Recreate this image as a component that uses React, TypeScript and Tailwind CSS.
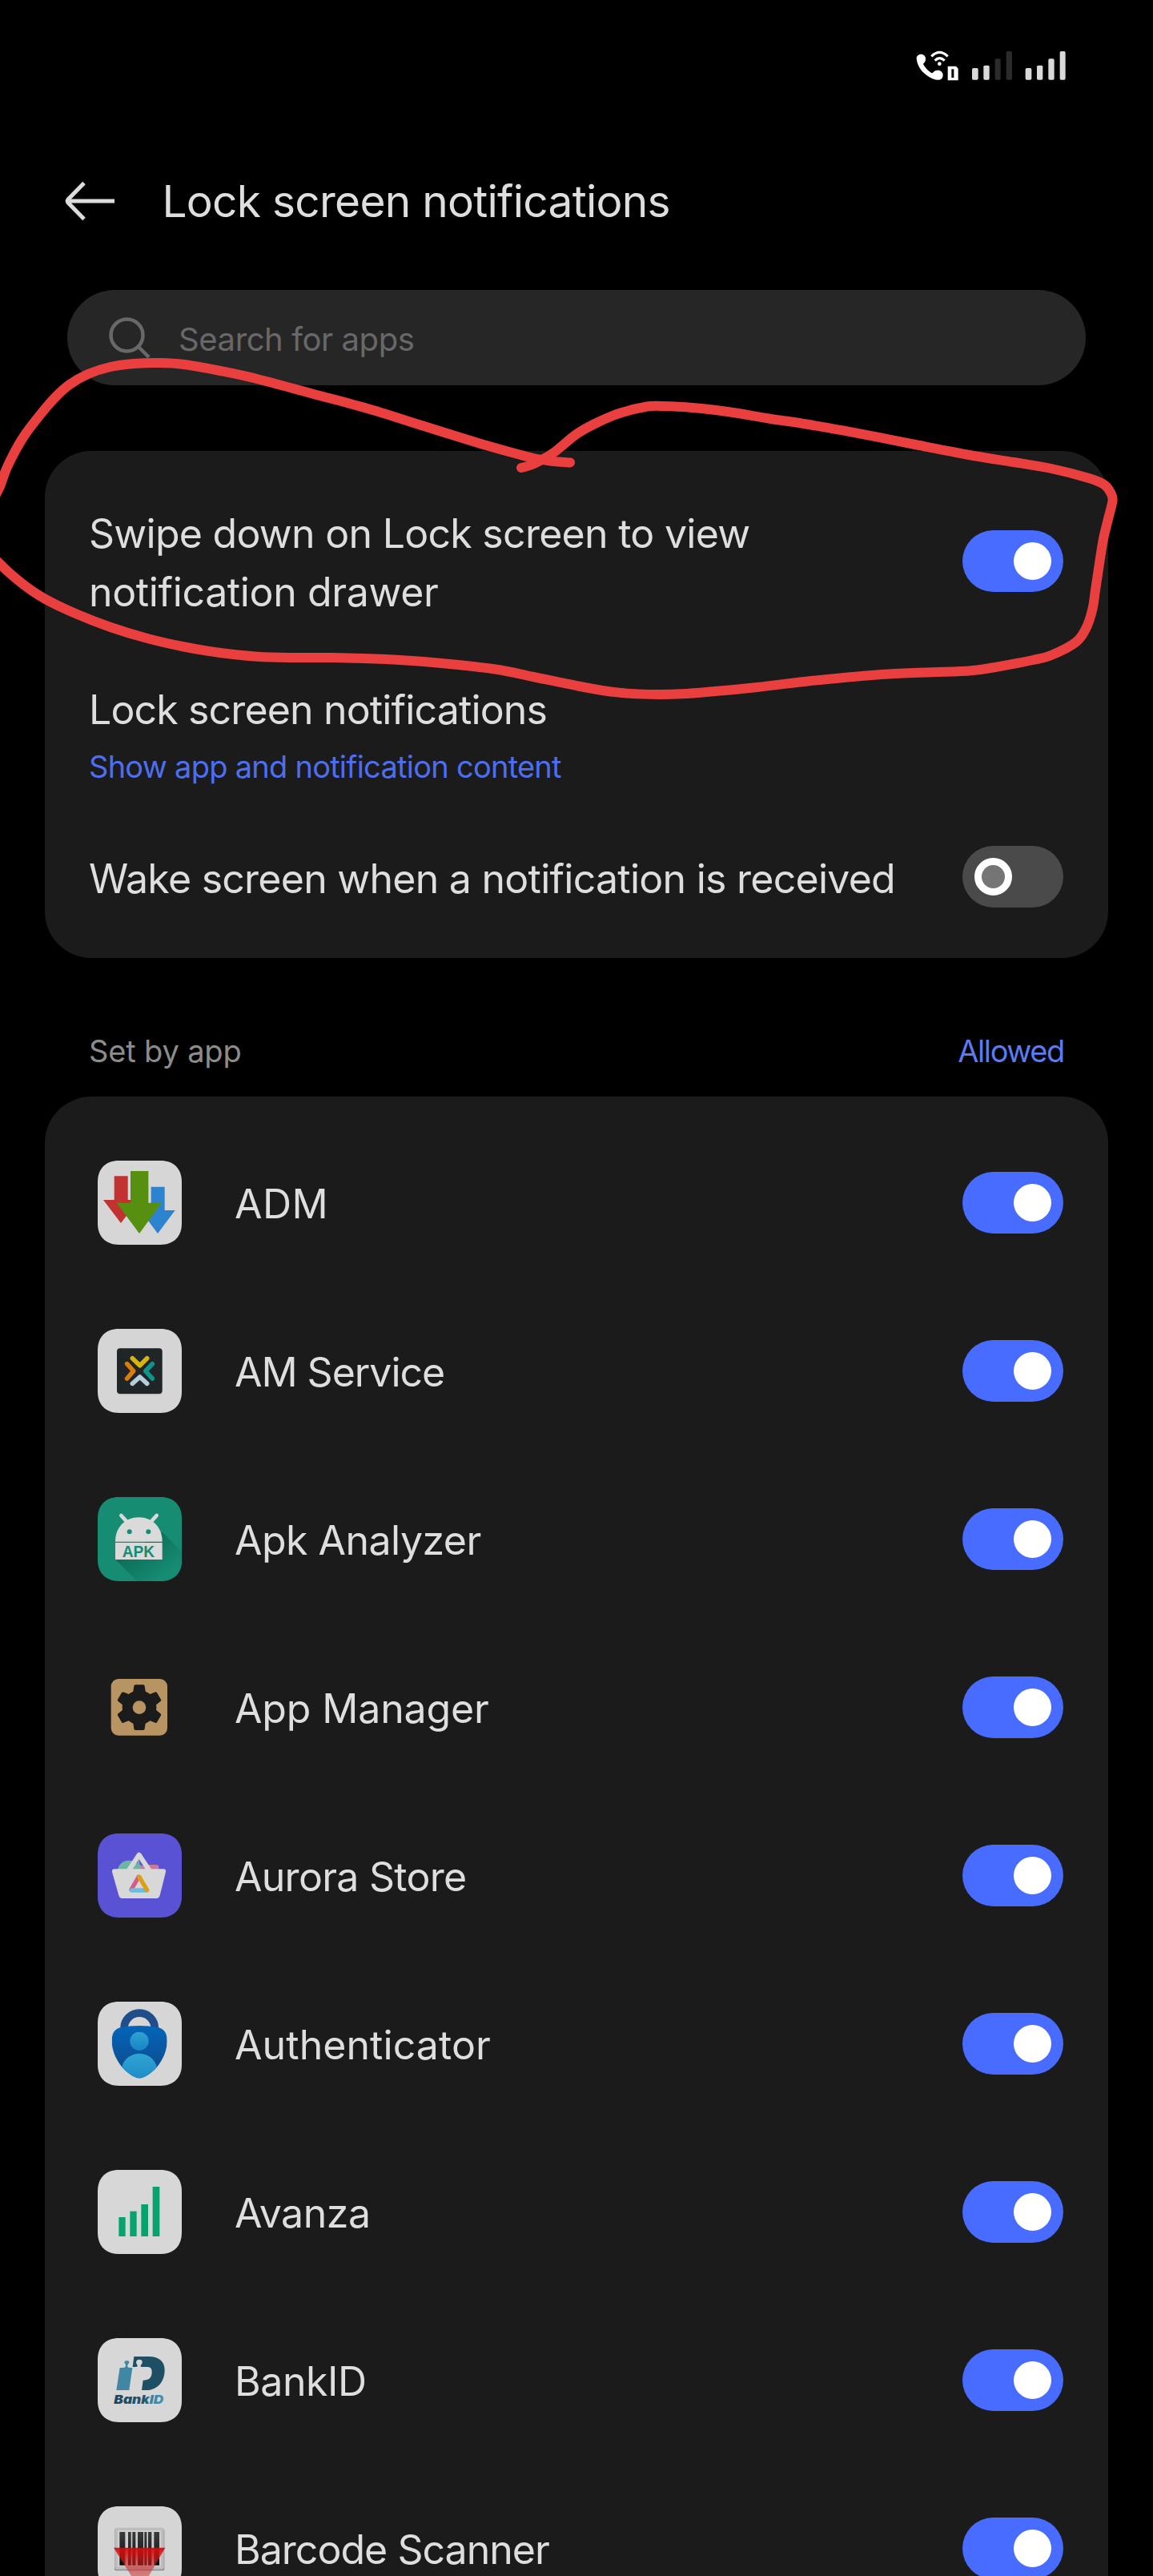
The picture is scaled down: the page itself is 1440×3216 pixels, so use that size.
import type { ReactNode } from "react";

function Toggle({ on }: { on: boolean }) {
  return on ? (
    <div className="flex h-[77px] w-[126px] shrink-0 items-center justify-end rounded-full bg-[#476cff] pr-[15px]">
      <div className="size-[47px] rounded-full bg-white" />
    </div>
  ) : (
    <div className="flex h-[77px] w-[126px] shrink-0 items-center rounded-full bg-[#4a4a4a] pl-[15px]">
      <div className="size-[47px] rounded-full border-[9px] border-white bg-[#757575]" />
    </div>
  );
}

function StatusIcons() {
  return (
    <svg viewBox="130 70 570 115" className="h-[38.33px] w-[190px]">
      <path
        d="M152 84C141 84 134 92 135 101C138 127 152 149 172 162C190 175 205 181 219 180C228 179 234 172 234 162C234 152 226 144 215 144C204 144 200 149 194 155C182 150 166 134 160 120C165 116 170 110 169 101C169 91 162 84 152 84Z"
        fill="#fff"
      />
      <g fill="none" stroke="#fff" strokeWidth="9.5">
        <path d="M191 92Q221 62 252 92" />
        <path d="M204 108Q221 90 240 108" />
      </g>
      <circle cx="221" cy="120" r="7" fill="#fff" />
      <path d="M252 129H283L291 138V182H252Z" fill="#fff" />
      <path d="M266 140H275V172H266Z" fill="#000" />
      <g fill="#d9d9d9">
        <rect x="343" y="136" width="23" height="44" rx="5" />
        <rect x="386" y="126" width="22" height="54" rx="5" />
        <rect x="543" y="136" width="23" height="44" rx="5" />
        <rect x="586" y="126" width="22" height="54" rx="5" />
        <rect x="629" y="101" width="22" height="79" rx="5" />
        <rect x="672" y="73" width="21" height="107" rx="5" />
      </g>
      <g fill="#2b2b2b">
        <rect x="429" y="101" width="21" height="79" rx="5" />
        <rect x="471" y="73" width="22" height="107" rx="5" />
      </g>
    </svg>
  );
}

function Tile({ bg, children }: { bg: string; children: ReactNode }) {
  return (
    <svg viewBox="0 0 315 315" className="block size-[105px] shrink-0">
      <path
        d="M80 0H235C285 0 315 30 315 80V235C315 285 285 315 235 315H80C30 315 0 285 0 235V80C0 30 30 0 80 0Z"
        fill={bg}
      />
      {children}
    </svg>
  );
}

const adm = (
  <Tile bg="#d6d6d6">
    <path d="M62 58H113V147H153L87 234L21 147H62Z" fill="#c23230" />
    <path d="M200 98H251V186H290L225 273L160 186H200Z" fill="#2c83cf" />
    <path d="M123 39H190V158H240L156 273L71 158H123Z" fill="#579010" />
  </Tile>
);

const amService = (
  <Tile bg="#d5d5d5">
    <rect x="72" y="78" width="170" height="169" rx="12" fill="#b9b9b9" />
    <rect x="72" y="73" width="170" height="170" rx="12" fill="#202528" />
    <g fill="none" strokeWidth="17" strokeLinecap="round" strokeLinejoin="round">
      <path d="M130 110L158 137L185 110" stroke="#d8b50a" />
      <path d="M110 131L134 158L110 186" stroke="#d67f0c" />
      <path d="M205 131L179 158L205 186" stroke="#0d958c" />
      <path d="M130 205L158 180L185 205" stroke="#b5cfda" />
    </g>
  </Tile>
);

const apkAnalyzer = (
  <Tile bg="#168c72">
    <defs>
      <linearGradient id="apkShade" x1="0" y1="0" x2="0.8" y2="0.8">
        <stop offset="0.4" stopColor="#0c6f59" />
        <stop offset="1" stopColor="#168c72" />
      </linearGradient>
    </defs>
    <path d="M242 132L315 205V240C315 285 285 315 235 315H148L66 234Z" fill="url(#apkShade)" />
    <path d="M66 167C66 112 104 76 154 76C204 76 242 112 242 167Z" fill="#dadada" />
    <path d="M88 69L108 91M221 69L201 91" stroke="#dadada" strokeWidth="14" strokeLinecap="round" />
    <circle cx="119" cy="130" r="9" fill="#168c72" />
    <circle cx="190" cy="130" r="9" fill="#168c72" />
    <rect x="66" y="171" width="176" height="63" fill="#dadada" />
    <text
      x="92"
      y="225"
      textLength="121"
      lengthAdjust="spacingAndGlyphs"
      fontSize="58"
      fontWeight="700"
      fontFamily="Liberation Sans, sans-serif"
      fill="#168c72"
    >
      APK
    </text>
  </Tile>
);

const gearTooth = "M132 104L136 78Q137 73 141 73H171Q175 73 176 78L180 104Z";
const appManager = (
  <Tile bg="#1b1b1b">
    <rect x="50" y="51" width="211" height="212" rx="28" fill="#b99463" />
    <g fill="#1b1b1b">
      <circle cx="156" cy="158" r="64" />
      {[0, 60, 120, 180, 240, 300].map((a) => (
        <path key={a} d={gearTooth} transform={`rotate(${a} 156 158)`} />
      ))}
    </g>
    <circle cx="156" cy="158" r="25" fill="#b99463" />
  </Tile>
);

const aurora = (
  <Tile bg="#5a52d5">
    <circle cx="117" cy="144" r="43" fill="#6fb5a3" />
    <rect x="150" y="117" width="79" height="30" rx="9" fill="#cc7a9c" />
    <path d="M140 133L155 96L163 133Z" fill="#6fb5a3" />
    <path d="M155 92L175 122L158 118Z" fill="#5a52d5" />
    <path d="M117 138L155 80L193 138" fill="none" stroke="#d8d8d8" strokeWidth="18" strokeLinejoin="round" />
    <path
      d="M64 133H246Q257 133 255 144L233 232Q230 243 220 243H91Q82 243 79 232L54 144Q52 133 64 133Z"
      fill="#d8d8d8"
    />
    <g strokeWidth="16" strokeLinecap="round">
      <path d="M126 210L153 163" stroke="#cf5d8d" />
      <path d="M128 213H180" stroke="#6cbcdc" />
      <path d="M156 163L185 212" stroke="#dca010" />
    </g>
  </Tile>
);

const authenticator = (
  <Tile bg="#d6d6d6">
    <defs>
      <linearGradient id="authBody" x1="0" y1="0" x2="0" y2="1">
        <stop offset="0" stopColor="#0466bb" />
        <stop offset="1" stopColor="#0f4786" />
      </linearGradient>
      <linearGradient id="authUser" x1="0" y1="0" x2="0" y2="1">
        <stop offset="0" stopColor="#2fa4d3" />
        <stop offset="1" stopColor="#1783c4" />
      </linearGradient>
      <clipPath id="authShield">
        <path d="M84 97Q156 83 229 97C248 103 260 117 260 146C260 208 216 264 172 283Q156 290 141 283C98 264 53 208 53 146C53 117 65 103 84 97Z" />
      </clipPath>
    </defs>
    <path d="M99 105V100A57 57 0 0 1 214 100V105" fill="none" stroke="#204e8a" strokeWidth="29" />
    <g clipPath="url(#authShield)">
      <rect x="50" y="80" width="215" height="210" fill="url(#authBody)" />
      <circle cx="156" cy="262" r="68" fill="url(#authUser)" />
    </g>
    <circle cx="156" cy="148" r="35" fill="url(#authUser)" />
  </Tile>
);

const avanza = (
  <Tile bg="#d7d7d7">
    <g fill="#08a36d">
      <rect x="79" y="177" width="25" height="72" />
      <rect x="121" y="155" width="25" height="94" />
      <rect x="163" y="129" width="26" height="120" />
      <rect x="206" y="63" width="26" height="186" />
    </g>
  </Tile>
);

const bankId = (
  <Tile bg="#d7d7d7">
    <defs>
      <linearGradient id="bankText" x1="0" y1="0" x2="1" y2="0">
        <stop offset="0" stopColor="#1c4458" />
        <stop offset="0.62" stopColor="#27566d" />
        <stop offset="0.7" stopColor="#3c7f9c" />
        <stop offset="1" stopColor="#4a93b3" />
      </linearGradient>
    </defs>
    <path
      d="M83 111H96C105 110 107 104 103 96C98 90 100 85 109 85C118 85 121 90 115 96C109 104 111 110 120 111H130L118 195H70Z"
      fill="#3f87a3"
    />
    <path
      d="M136 69H192C232 69 251 90 251 119C251 165 222 195 182 195H165L170 158C190 158 202 150 203 130C204 113 197 108 184 108H168C160 108 159 103 164 98C171 89 166 80 156 80C146 80 141 89 147 98C151 104 149 108 143 108H131Z"
      fill="#1e4f65"
    />
    <text
      x="61"
      y="245"
      textLength="186"
      lengthAdjust="spacingAndGlyphs"
      fontSize="45"
      fontWeight="900"
      fontStyle="italic"
      fontFamily="Inter, Liberation Sans, sans-serif"
      fill="url(#bankText)"
    >
      BankID
    </text>
  </Tile>
);

const bars = [
  [82, 21],
  [114, 11],
  [130, 12],
  [150, 21],
  [175, 9],
  [189, 13],
  [211, 20],
];
const barcode = (
  <Tile bg="#d5d5d5">
    <defs>
      <linearGradient id="barInk" x1="0" y1="0" x2="0" y2="1">
        <stop offset="0" stopColor="#3c3c3c" />
        <stop offset="1" stopColor="#0c0c0c" />
      </linearGradient>
      <linearGradient id="beam" x1="0" y1="0" x2="0" y2="1">
        <stop offset="0" stopColor="#d90606" stopOpacity="0.95" />
        <stop offset="0.4" stopColor="#cc2020" stopOpacity="0.6" />
        <stop offset="1" stopColor="#cc5050" stopOpacity="0.45" />
      </linearGradient>
    </defs>
    <rect x="63" y="84" width="187" height="157" rx="8" fill="#8e8e8e" />
    <rect x="64" y="80" width="184" height="156" rx="8" fill="#bdbdbd" />
    <rect x="75" y="90" width="162" height="136" fill="#cfcfcf" />
    {bars.map(([x, w]) => (
      <rect key={x} x={x} y="96" width={w} height="125" fill="url(#barInk)" />
    ))}
    <path d="M60 155H253L160 315Z" fill="url(#beam)" />
  </Tile>
);

const apps: { name: string; icon: ReactNode; tracking: string }[] = [
  { name: "ADM", icon: adm, tracking: "tracking-[0.4px]" },
  { name: "AM Service", icon: amService, tracking: "tracking-[-1.04px]" },
  { name: "Apk Analyzer", icon: apkAnalyzer, tracking: "tracking-[-0.52px]" },
  { name: "App Manager", icon: appManager, tracking: "tracking-[-0.15px]" },
  { name: "Aurora Store", icon: aurora, tracking: "tracking-[-0.72px]" },
  { name: "Authenticator", icon: authenticator, tracking: "tracking-[0.07px]" },
  { name: "Avanza", icon: avanza, tracking: "tracking-[-0.44px]" },
  { name: "BankID", icon: bankId, tracking: "tracking-[-0.44px]" },
  { name: "Barcode Scanner", icon: barcode, tracking: "tracking-[-0.97px]" },
];

// Points of the freehand marker loop, in page pixels.
const marker: [number, number][] = [
  [651, 584], [662, 581], [675, 575], [693, 564], [720, 542], [747, 527], [775, 515.5], [808, 507.5],
  [827, 507], [865, 509], [912, 514.5], [960, 522.5], [1007, 529.5], [1054, 537.7], [1101, 546.7],
  [1148, 556], [1219, 569.5], [1266, 577], [1313, 585], [1360, 597], [1379, 605], [1387, 615],
  [1389.5, 625], [1384, 648], [1378, 673], [1372.5, 707], [1368, 737], [1364.5, 760], [1357, 783],
  [1344, 801.5], [1313, 818], [1290, 824], [1243, 833], [1210, 837.5], [1148, 839.7], [1101, 842],
  [1007, 850.7], [936, 859], [851, 866.3], [794, 866.3], [761, 863.3], [722, 856.5], [666, 845],
  [620, 835.7], [551, 828], [482, 823], [413, 821], [367, 821], [321, 819.7], [275, 815], [230, 807.5],
  [184, 797], [138, 783], [92, 765], [55, 747], [27, 728], [0, 704], [-14, 685], [-14, 640],
  [0, 607], [9, 583], [27, 549], [46, 523], [69, 496], [87, 480], [110, 467], [138, 458], [168, 454],
  [200, 453], [230, 455], [275, 463], [321, 473], [390, 491.5], [459, 510], [528, 531.5], [597, 553],
  [643, 566], [666, 572], [689, 575.7], [712, 577.5],
];

function smooth(p: [number, number][]) {
  let d = `M${p[0][0]} ${p[0][1]}`;
  for (let i = 0; i < p.length - 1; i++) {
    const a = p[Math.max(i - 1, 0)];
    const b = p[i];
    const c = p[i + 1];
    const e = p[Math.min(i + 2, p.length - 1)];
    d += `C${b[0] + (c[0] - a[0]) / 6} ${b[1] + (c[1] - a[1]) / 6} ${c[0] - (e[0] - b[0]) / 6} ${c[1] - (e[1] - b[1]) / 6} ${c[0]} ${c[1]}`;
  }
  return d;
}

export default function App() {
  return (
    <div className="relative flex h-[3216px] w-[1440px] flex-col overflow-hidden bg-black font-['Inter','Liberation_Sans',sans-serif] text-[50px] text-[#dedede]">
      <div className="flex h-[190px] shrink-0 justify-end pt-[63px] pr-[106.7px]">
        <StatusIcons />
      </div>

      <header className="flex h-[122px] shrink-0 items-center pl-[80px]">
        <svg viewBox="0 0 64 52" className="h-[52px] w-[64px]" fill="none" stroke="#dcdcdc" strokeWidth="5">
          <path d="M63 26H5M25 3.5L5 24Q3.500 26 5 28L25 48.500" />
        </svg>
        <h1 className="ml-[58.5px] text-[55px] leading-[66px] tracking-[-0.73px]">Lock screen notifications</h1>
      </header>

      <div className="mx-[84px] mt-[50px] flex h-[119px] shrink-0 items-center rounded-full bg-[#262626] pl-[52px] text-[#686868]">
        <svg viewBox="0 0 52 52" className="size-[52px]" fill="none" stroke="#686868" strokeWidth="4.500">
          <circle cx="22.500" cy="22.500" r="20" />
          <path d="M37 37L50 50" />
        </svg>
        <span className="ml-[35px] pt-[4px] text-[40px] leading-[48px] tracking-[-0.4px]">Search for apps</span>
      </div>

      <section className="mx-[56px] mt-[82px] h-[633px] shrink-0 rounded-[58px] bg-[#1b1b1b] pr-[56px] pl-[55px] pt-[27px]">
        <div className="flex h-[221px] items-center justify-between">
          <p className="pt-[5px] leading-[73px]">
            <span className="block tracking-[-0.72px]">Swipe down on Lock screen to view</span>
            <span className="block tracking-[-0.36px]">notification drawer</span>
          </p>
          <Toggle on />
        </div>
        <div className="h-[179px] pt-[45px]">
          <p className="leading-[60px] tracking-[-0.85px]">Lock screen notifications</p>
          <p className="mt-4 text-[38px] leading-[50px] tracking-[-0.74px] text-[#4e6ef0]">
            Show app and notification content
          </p>
        </div>
        <div className="flex items-center justify-between pt-[66px]">
          <p className="pt-[4px] leading-[60px] tracking-[-0.74px]">Wake screen when a notification is received</p>
          <Toggle on={false} />
        </div>
      </section>

      <div className="flex h-[173px] shrink-0 justify-between pt-[91px] pr-[111px] pl-[111px] text-[38px] leading-[50px]">
        <span className="tracking-[-0.15px] text-[#8c8c8c]">Set by app</span>
        <span className="tracking-[-1.4px] text-[#5b7bf3]">Allowed</span>
      </div>

      <section className="mx-[56px] h-[1960px] shrink-0 rounded-t-[58px] bg-[#1b1b1b] pt-[27px]">
        {apps.map((app) => (
          <div key={app.name} className="flex h-[210px] items-center pr-[56px] pl-[66px]">
            {app.icon}
            <span className={`ml-[66px] flex-1 pt-[4px] leading-[60px] ${app.tracking}`}>{app.name}</span>
            <Toggle on />
          </div>
        ))}
      </section>

      <svg viewBox="0 0 1440 3216" className="pointer-events-none absolute inset-0 h-[3216px] w-[1440px]">
        <path
          d={smooth(marker)}
          fill="none"
          stroke="#ea3f3f"
          strokeWidth="12"
          strokeLinecap="round"
          strokeLinejoin="round"
        />
      </svg>
    </div>
  );
}
